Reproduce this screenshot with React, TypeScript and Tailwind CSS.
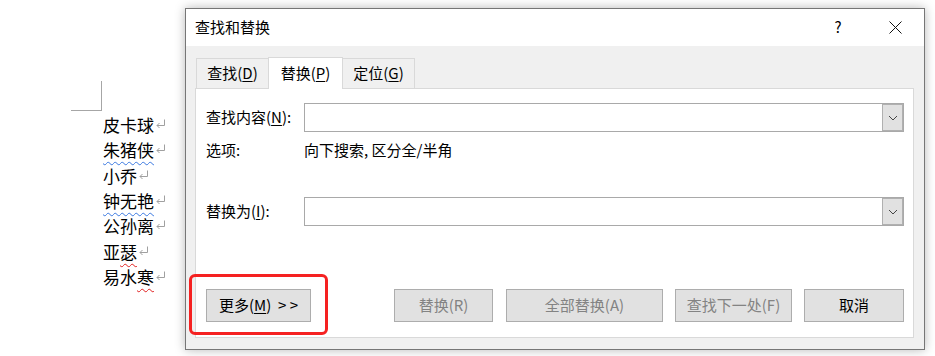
import React from "react";

const Ret = () => (
  <svg width="11" height="10" viewBox="0 0 11 10" className="inline-block ml-[1px] align-[3px]">
    <path d="M9.5 0.5 V6.5 H2" fill="none" stroke="#a0a0a0" strokeWidth="1" />
    <path d="M4.5 4 L2 6.5 L4.5 9" fill="none" stroke="#a0a0a0" strokeWidth="1" />
  </svg>
);

const Chevron = () => (
  <svg width="10" height="6" viewBox="0 0 10 6">
    <path d="M1 1 L5 5 L9 1" fill="none" stroke="#444" strokeWidth="1" />
  </svg>
);

const Combo = () => (
  <div className="flex flex-1 h-[29px] border border-[#a9a9a9] bg-white">
    <div className="flex-1" />
    <div className="w-[21px] border border-[#b0b0b0] bg-[#e1e1e1] flex items-center justify-center">
      <Chevron />
    </div>
  </div>
);

const U = ({ children }: { children: React.ReactNode }) => (
  <span className="underline underline-offset-[2px] decoration-1">{children}</span>
);

export default function App() {
  const blue = "underline decoration-wavy decoration-[#3a78e0] underline-offset-[4px] decoration-1";
  const red = "underline decoration-wavy decoration-[#e02020] underline-offset-[4px] decoration-1";
  return (
    <div className="flex w-[935px] h-[356px] bg-white overflow-hidden text-black font-['Noto_Sans_CJK_SC',sans-serif]">
      {/* document */}
      <div className="w-[185px] shrink-0 flex flex-col pt-[81px]">
        <div className="ml-[71px] w-[31px] h-[30px] border-r border-b border-[#a6a6a6]" />
        <div className="ml-[103px] mt-[1px] text-[17px] leading-[25.33px] whitespace-nowrap">
          <div>皮卡球<Ret /></div>
          <div><span className={blue}>朱猪侠</span><Ret /></div>
          <div>小乔<Ret /></div>
          <div><span className={blue}>钟无艳</span><Ret /></div>
          <div>公孙离<Ret /></div>
          <div>亚<span className={red}>瑟</span><Ret /></div>
          <div>易水<span className={red}>寒</span><Ret /></div>
        </div>
      </div>

      {/* dialog */}
      <div className="mt-[8px] w-[740px] h-[342px] shrink-0 border border-[#767676] bg-[#f0f0f0] shadow-[0_0_10px_rgba(0,0,0,0.28)] flex flex-col">
        <div className="h-[37px] bg-white flex items-center pl-[9px] text-[15px]">
          <div className="flex-1">查找和替换</div>
          <div className="w-[46px] mr-[11px] text-center text-[15px]">?</div>
          <div className="w-[46px] mr-[6px] flex items-center justify-center">
            <svg width="13" height="13" viewBox="0 0 13 13">
              <path d="M0.5 0.5 L12.5 12.5 M12.5 0.5 L0.5 12.5" stroke="#111" strokeWidth="1" />
            </svg>
          </div>
        </div>

        <div className="mt-[11px] ml-[10px] flex items-end h-[31px] text-[15px]">
          <div className="w-[72px] h-[30px] border-t border-l border-[#d9d9d9] flex items-center justify-center">
            查找(<U>D</U>)
          </div>
          <div className="w-[75px] h-[32px] -mb-[1px] relative z-10 bg-white border-t border-l border-r border-[#d9d9d9] flex items-center justify-center">
            替换(<U>P</U>)
          </div>
          <div className="w-[72px] h-[30px] border-t border-r border-[#d9d9d9] flex items-center justify-center">
            定位(<U>G</U>)
          </div>
        </div>

        <div className="ml-[9px] mr-[10px] h-[250px] border border-[#d9d9d9] bg-white pl-[10px] pr-[9px] pt-[14px] flex flex-col text-[15px]">
          <div className="flex items-center">
            <div className="w-[98px]">查找内容(<U>N</U>):</div>
            <Combo />
          </div>
          <div className="flex items-center mt-[7px] h-[22px]">
            <div className="w-[98px]">选项:</div>
            <div>向下搜索, 区分全/半角</div>
          </div>
          <div className="flex items-center mt-[36px]">
            <div className="w-[98px]">替换为(<U>I</U>):</div>
            <Combo />
          </div>
          <div className="flex mt-[63px] h-[33px]">
            <div className="relative w-[105px]">
              <div className="absolute left-[-17px] top-[-15px] w-[139px] h-[61px] border-[3px] border-[#f52121] rounded-[6px]" />
              <div className="w-full h-full border border-[#adadad] bg-[#e1e1e1] flex items-center justify-center">
                更多(<U>M</U>)&nbsp;&nbsp;&gt; &gt;
              </div>
            </div>
            <div className="ml-[83px] w-[99px] border border-[#adadad] bg-[#e1e1e1] text-[#838383] flex items-center justify-center">
              替换(R)
            </div>
            <div className="ml-[13px] w-[157px] border border-[#adadad] bg-[#e1e1e1] text-[#838383] flex items-center justify-center">
              全部替换(A)
            </div>
            <div className="ml-[12px] w-[117px] border border-[#adadad] bg-[#e1e1e1] text-[#838383] flex items-center justify-center">
              查找下一处(F)
            </div>
            <div className="ml-[12px] w-[100px] border border-[#adadad] bg-[#e1e1e1] flex items-center justify-center">
              取消
            </div>
          </div>
        </div>
      </div>
    </div>
  );
}
